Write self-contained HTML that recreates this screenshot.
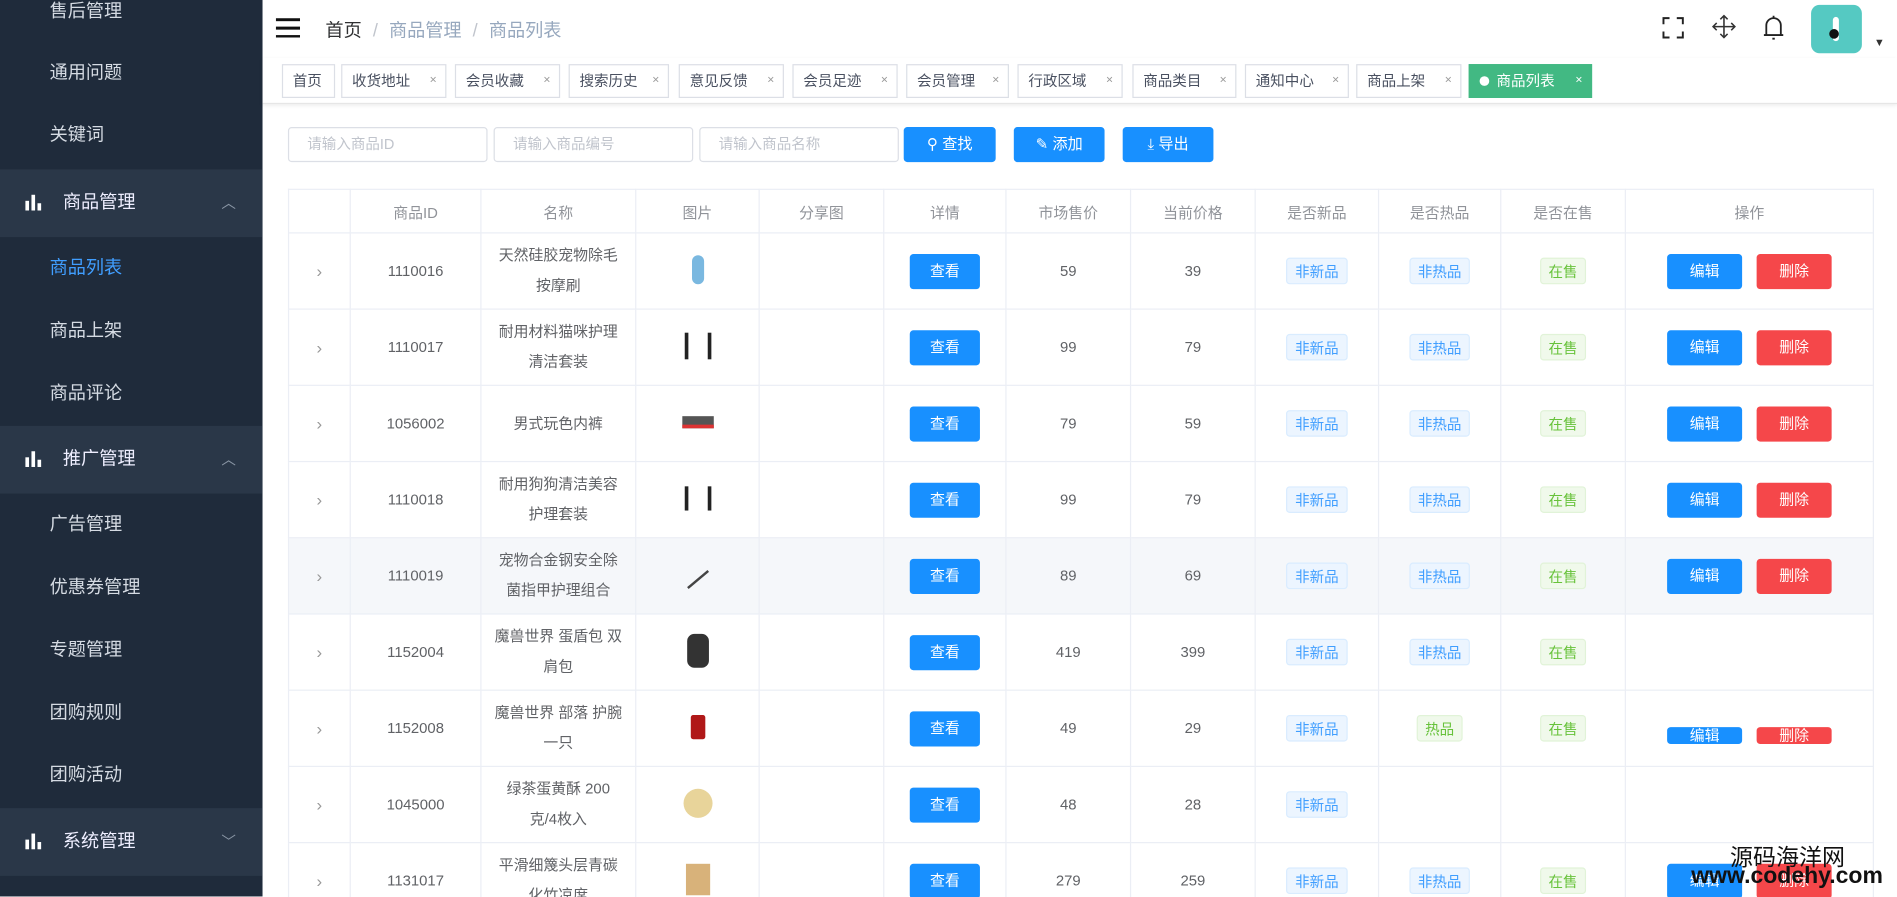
<!DOCTYPE html>
<html><head><meta charset="utf-8">
<style>
*{margin:0;padding:0;box-sizing:border-box}
html,body{width:1897px;height:897px;overflow:hidden;background:#fff}
#w{width:1568px;height:741px;transform:scale(1.2098);transform-origin:0 0;position:relative;font-family:"Liberation Sans","Noto Sans CJK SC",sans-serif;color:#606266;font-size:13px}
.sb{position:absolute;left:0;top:0;width:217px;height:741px;background:#1f2b3b}
.sb div{position:absolute;left:0;width:217px;height:52px;line-height:52px;padding-left:41px;color:#d5dbe3;font-size:15px}
.sb .g{background:#2a3748;padding-left:52px;height:56px;line-height:56px;color:#eef}
.sb .g i{position:absolute;left:21px;top:21px;width:14px;height:13px}
.sb .g i b{position:absolute;bottom:0;background:#fff;width:3px}
.sb .g em{position:absolute;right:22px;top:0;font-style:normal;color:#8a96a5;font-size:12px}
.hd{position:absolute;left:217px;top:0;right:0;height:48px}
.tags{position:absolute;left:217px;top:48px;right:0;height:38px;border-bottom:1px solid #e6e6e6;box-shadow:0 1px 3px rgba(0,0,0,.08)}
.tag{position:absolute;top:5px;height:28px;line-height:26px;border:1px solid #dcdfe6;font-size:12px;color:#495060;padding-left:8px}
.tag s{text-decoration:none;position:absolute;right:7px;font-size:10px;color:#999}
.in{position:absolute;top:105px;height:29px;border:1px solid #dcdfe6;border-radius:3px;color:#c0c4cc;font-size:12px;line-height:27px;padding-left:15px}
.bt{position:absolute;top:105px;height:29px;background:#1890ff;color:#fff;border-radius:3px;font-size:12.5px;line-height:29px;text-align:center}
table{position:absolute;left:238px;top:156px;width:1311px;border-collapse:collapse;table-layout:fixed}
td,th{border:1px solid #ebeef5;text-align:center;font-weight:normal;font-size:12.3px;color:#606266}
th{height:36px;color:#909399}
td{height:63px}
tr.h td{background:#f5f7fa}
.nm{padding:0 10px;line-height:25px}
.ck{display:inline-block;width:58px;height:29px;line-height:29px;background:#1890ff;color:#fff;border-radius:3px}
.tg{display:inline-block;height:22px;line-height:22px;padding:0 6px;background:#ecf5ff;color:#409eff;border-radius:3px;font-size:12px;border:1px solid #d9ecff}
.gr{background:#f0f9eb;color:#67c23a;border-color:#e1f3d8}
.e{display:inline-block;width:62px;height:29px;line-height:29px;background:#1890ff;color:#fff;border-radius:3px;margin:0 6px}
.d{background:#f5474a}
.ar{color:#999;font-size:14px}
</style></head><body><div id="w">
<div class="sb">
<div style="top:-16px">售后管理</div>
<div style="top:35px">通用问题</div>
<div style="top:86px">关键词</div>
<div class="g" style="top:140px"><i><b style="left:0;height:8px"></b><b style="left:5px;height:13px"></b><b style="left:10px;height:6px"></b></i>商品管理<em>︿</em></div>
<div style="top:196px;color:#409eff">商品列表</div>
<div style="top:248px">商品上架</div>
<div style="top:300px">商品评论</div>
<div class="g" style="top:352px"><i><b style="left:0;height:8px"></b><b style="left:5px;height:13px"></b><b style="left:10px;height:6px"></b></i>推广管理<em>︿</em></div>
<div style="top:408px">广告管理</div>
<div style="top:460px">优惠券管理</div>
<div style="top:512px">专题管理</div>
<div style="top:564px">团购规则</div>
<div style="top:615px">团购活动</div>
<div class="g" style="top:668px"><i><b style="left:0;height:8px"></b><b style="left:5px;height:13px"></b><b style="left:10px;height:6px"></b></i>系统管理<em>﹀</em></div>
</div>
<div class="hd">
<svg style="position:absolute;left:11px;top:15px" width="20" height="16"><rect y="0" width="20" height="2.5" fill="#111"/><rect y="7" width="20" height="2.5" fill="#111"/><rect y="14" width="20" height="2.5" fill="#111"/></svg>
<div style="position:absolute;left:52px;top:14px;font-size:15px;color:#303133">首页 <span style="color:#c0c4cc;margin:0 5px">/</span> <span style="color:#97a8be">商品管理</span> <span style="color:#c0c4cc;margin:0 5px">/</span> <span style="color:#97a8be">商品列表</span></div>
<svg style="position:absolute;left:1157px;top:14px" width="18" height="18" fill="none" stroke="#222" stroke-width="1.6"><path d="M1 6V1h5M12 1h5v5M17 12v5h-5M6 17H1v-5"/></svg>
<svg style="position:absolute;left:1198px;top:12px" width="20" height="20" fill="none" stroke="#333" stroke-width="1.3"><path d="M10 1v18M1 10h18M7 4l3-3 3 3M7 16l3 3 3-3M4 7l-3 3 3 3M16 7l3 3-3 3"/></svg>
<svg style="position:absolute;left:1240px;top:12px" width="18" height="22" fill="none" stroke="#222" stroke-width="1.5"><path d="M3 17V9a6 6 0 0 1 12 0v8zM1 17h16M8 20h2M9 1v2"/></svg>
<div style="position:absolute;left:1280px;top:4px;width:42px;height:40px;background:#55c9c2;border-radius:7px"><div style="position:absolute;left:18px;top:10px;width:5px;height:20px;background:#fff;border-radius:3px"></div><div style="position:absolute;left:15px;top:20px;width:8px;height:8px;background:#111;border-radius:50%"></div></div>
<div style="position:absolute;left:1332px;top:30px;font-size:9px;color:#333">▼</div>
</div>
<div class="tags">
<div class="tag" style="left:16px;width:44px">首页</div>
<div class="tag" style="left:65px;width:87px">收货地址<s>×</s></div>
<div class="tag" style="left:159px;width:87px">会员收藏<s>×</s></div>
<div class="tag" style="left:253px;width:83px">搜索历史<s>×</s></div>
<div class="tag" style="left:344px;width:87px">意见反馈<s>×</s></div>
<div class="tag" style="left:438px;width:87px">会员足迹<s>×</s></div>
<div class="tag" style="left:532px;width:85px">会员管理<s>×</s></div>
<div class="tag" style="left:624px;width:87px">行政区域<s>×</s></div>
<div class="tag" style="left:719px;width:86px">商品类目<s>×</s></div>
<div class="tag" style="left:812px;width:86px">通知中心<s>×</s></div>
<div class="tag" style="left:904px;width:87px">商品上架<s>×</s></div>
<div class="tag" style="left:997px;width:102px;background:#42b983;border-color:#42b983;color:#fff;padding-left:22px"><b style="position:absolute;left:8px;top:9px;width:8px;height:8px;border-radius:50%;background:#fff"></b>商品列表<s style="color:#fff">×</s></div>
</div>
<div class="in" style="left:238px;width:165px">请输入商品ID</div>
<div class="in" style="left:408px;width:165px">请输入商品编号</div>
<div class="in" style="left:578px;width:165px">请输入商品名称</div>
<div class="bt" style="left:747px;width:76px">⚲ 查找</div>
<div class="bt" style="left:838px;width:75px">✎ 添加</div>
<div class="bt" style="left:928px;width:75px">⤓ 导出</div>
<table>
<colgroup><col style="width:51px"><col style="width:108px"><col style="width:128px"><col style="width:102px"><col style="width:103px"><col style="width:101px"><col style="width:103px"><col style="width:103px"><col style="width:102px"><col style="width:101px"><col style="width:103px"><col style="width:205px"></colgroup>
<tr><th></th><th>商品ID</th><th>名称</th><th>图片</th><th>分享图</th><th>详情</th><th>市场售价</th><th>当前价格</th><th>是否新品</th><th>是否热品</th><th>是否在售</th><th>操作</th></tr>
<tr><td class="ar">›</td><td>1110016</td><td class="nm">天然硅胶宠物除毛按摩刷</td><td><span style="display:inline-block;width:10px;height:24px;background:#7ab8e0;border-radius:5px"></span></td><td></td><td><span class="ck">查看</span></td><td>59</td><td>39</td><td><span class="tg">非新品</span></td><td><span class="tg">非热品</span></td><td><span class="tg gr">在售</span></td><td><span class="e">编辑</span><span class="e d">删除</span></td></tr>
<tr><td class="ar">›</td><td>1110017</td><td class="nm">耐用材料猫咪护理清洁套装</td><td><span style="display:inline-block;width:22px;height:22px;border-left:3px solid #222;border-right:3px solid #222"></span></td><td></td><td><span class="ck">查看</span></td><td>99</td><td>79</td><td><span class="tg">非新品</span></td><td><span class="tg">非热品</span></td><td><span class="tg gr">在售</span></td><td><span class="e">编辑</span><span class="e d">删除</span></td></tr>
<tr><td class="ar">›</td><td>1056002</td><td class="nm">男式玩色内裤</td><td><span style="display:inline-block;width:26px;height:10px;background:#555;border-bottom:3px solid #d33"></span></td><td></td><td><span class="ck">查看</span></td><td>79</td><td>59</td><td><span class="tg">非新品</span></td><td><span class="tg">非热品</span></td><td><span class="tg gr">在售</span></td><td><span class="e">编辑</span><span class="e d">删除</span></td></tr>
<tr><td class="ar">›</td><td>1110018</td><td class="nm">耐用狗狗清洁美容护理套装</td><td><span style="display:inline-block;width:22px;height:20px;border-left:3px solid #222;border-right:3px solid #222"></span></td><td></td><td><span class="ck">查看</span></td><td>99</td><td>79</td><td><span class="tg">非新品</span></td><td><span class="tg">非热品</span></td><td><span class="tg gr">在售</span></td><td><span class="e">编辑</span><span class="e d">删除</span></td></tr>
<tr class="h"><td class="ar">›</td><td>1110019</td><td class="nm">宠物合金钢安全除菌指甲护理组合</td><td><span style="display:inline-block;width:22px;height:2px;background:#444;transform:rotate(-40deg)"></span></td><td></td><td><span class="ck">查看</span></td><td>89</td><td>69</td><td><span class="tg">非新品</span></td><td><span class="tg">非热品</span></td><td><span class="tg gr">在售</span></td><td><span class="e">编辑</span><span class="e d">删除</span></td></tr>
<tr><td class="ar">›</td><td>1152004</td><td class="nm">魔兽世界 蛋盾包 双肩包</td><td><span style="display:inline-block;width:18px;height:28px;background:#333;border-radius:6px"></span></td><td></td><td><span class="ck">查看</span></td><td>419</td><td>399</td><td><span class="tg">非新品</span></td><td><span class="tg">非热品</span></td><td><span class="tg gr">在售</span></td><td></td></tr>
<tr><td class="ar">›</td><td>1152008</td><td class="nm">魔兽世界 部落 护腕 一只</td><td><span style="display:inline-block;width:12px;height:20px;background:#b01818;border-radius:2px"></span></td><td></td><td><span class="ck">查看</span></td><td>49</td><td>29</td><td><span class="tg">非新品</span></td><td><span class="tg gr">热品</span></td><td><span class="tg gr">在售</span></td><td><span class="e" style="height:14px;line-height:14px;vertical-align:-14px;overflow:hidden">编辑</span><span class="e d" style="height:14px;line-height:14px;vertical-align:-14px;overflow:hidden">删除</span></td></tr>
<tr><td class="ar">›</td><td>1045000</td><td class="nm">绿茶蛋黄酥 200克/4枚入</td><td><span style="display:inline-block;width:24px;height:24px;background:#e8d49a;border-radius:50%"></span></td><td></td><td><span class="ck">查看</span></td><td>48</td><td>28</td><td><span class="tg">非新品</span></td><td></td><td></td><td></td></tr>
<tr><td class="ar">›</td><td>1131017</td><td class="nm">平滑细篾头层青碳化竹凉席</td><td><span style="display:inline-block;width:20px;height:26px;background:#d8b27a"></span></td><td></td><td><span class="ck">查看</span></td><td>279</td><td>259</td><td><span class="tg">非新品</span></td><td><span class="tg">非热品</span></td><td><span class="tg gr">在售</span></td><td><span class="e">编辑</span><span class="e d">删除</span></td></tr>
</table>
<div style="position:absolute;left:1430px;top:694px;font-size:19px;color:#111">源码海洋网</div>
<div style="position:absolute;left:1398px;top:714px;font-size:19px;color:#111;font-weight:bold">www.codehy.com</div>
</div></body></html>
